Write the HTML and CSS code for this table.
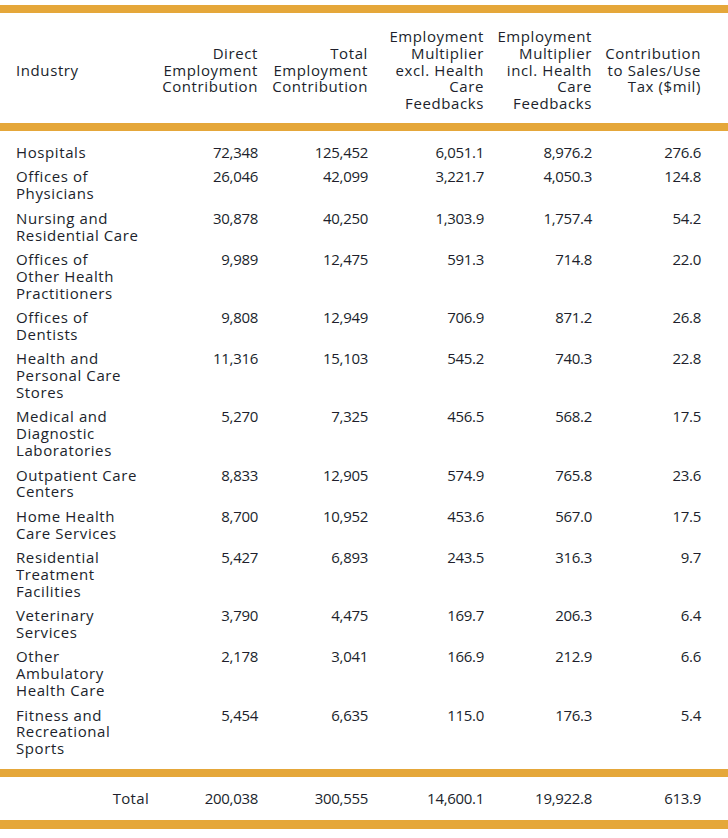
FILE: index.html
```html
<!DOCTYPE html>
<html lang="en">
<head>
<meta charset="utf-8">
<title>Health Care Employment Contribution</title>
<link rel="stylesheet" href="styles.css">
</head>
<body>
<table class="data">
  <colgroup>
    <col class="c-ind"><col class="c-dir"><col class="c-tot"><col class="c-exc"><col class="c-inc"><col class="c-tax">
  </colgroup>
  <thead>
    <tr>
      <th class="lbl">Industry</th>
      <th>Direct<br>Employment<br>Contribution</th>
      <th>Total<br>Employment<br>Contribution</th>
      <th>Employment<br>Multiplier<br>excl. Health<br>Care<br>Feedbacks</th>
      <th>Employment<br>Multiplier<br>incl. Health<br>Care<br>Feedbacks</th>
      <th>Contribution<br>to Sales/Use<br>Tax ($mil)</th>
    </tr>
  </thead>
  <tbody>
    <tr class="first"><td class="lbl">Hospitals</td><td>72,348</td><td>125,452</td><td>6,051.1</td><td>8,976.2</td><td>276.6</td></tr>
    <tr><td class="lbl">Offices of<br>Physicians</td><td>26,046</td><td>42,099</td><td>3,221.7</td><td>4,050.3</td><td>124.8</td></tr>
    <tr><td class="lbl">Nursing and<br>Residential Care</td><td>30,878</td><td>40,250</td><td>1,303.9</td><td>1,757.4</td><td>54.2</td></tr>
    <tr><td class="lbl">Offices of<br>Other Health<br>Practitioners</td><td>9,989</td><td>12,475</td><td>591.3</td><td>714.8</td><td>22.0</td></tr>
    <tr><td class="lbl">Offices of<br>Dentists</td><td>9,808</td><td>12,949</td><td>706.9</td><td>871.2</td><td>26.8</td></tr>
    <tr><td class="lbl">Health and<br>Personal Care<br>Stores</td><td>11,316</td><td>15,103</td><td>545.2</td><td>740.3</td><td>22.8</td></tr>
    <tr><td class="lbl">Medical and<br>Diagnostic<br>Laboratories</td><td>5,270</td><td>7,325</td><td>456.5</td><td>568.2</td><td>17.5</td></tr>
    <tr><td class="lbl">Outpatient Care<br>Centers</td><td>8,833</td><td>12,905</td><td>574.9</td><td>765.8</td><td>23.6</td></tr>
    <tr><td class="lbl">Home Health<br>Care Services</td><td>8,700</td><td>10,952</td><td>453.6</td><td>567.0</td><td>17.5</td></tr>
    <tr><td class="lbl">Residential<br>Treatment<br>Facilities</td><td>5,427</td><td>6,893</td><td>243.5</td><td>316.3</td><td>9.7</td></tr>
    <tr><td class="lbl">Veterinary<br>Services</td><td>3,790</td><td>4,475</td><td>169.7</td><td>206.3</td><td>6.4</td></tr>
    <tr><td class="lbl">Other<br>Ambulatory<br>Health Care</td><td>2,178</td><td>3,041</td><td>166.9</td><td>212.9</td><td>6.6</td></tr>
    <tr class="last"><td class="lbl">Fitness and<br>Recreational<br>Sports</td><td>5,454</td><td>6,635</td><td>115.0</td><td>176.3</td><td>5.4</td></tr>
  </tbody>
  <tfoot>
    <tr><td class="tot-lbl">Total</td><td>200,038</td><td>300,555</td><td>14,600.1</td><td>19,922.8</td><td>613.9</td></tr>
  </tfoot>
</table>
</body>
</html>
```

FILE: styles.css
```css
html, body {
  margin: 0;
  padding: 0;
  background: #ffffff;
}

body {
  padding-top: 5px;
  font-family: "Open Sans", "DejaVu Sans", sans-serif;
  font-size: 15px;
  line-height: 16.8px;
  color: #201f2c;
}

.data {
  width: 728px;
  border-collapse: collapse;
  table-layout: fixed;
}

.c-ind { width: 158px; }
.c-dir { width: 100px; }
.c-tot { width: 110px; }
.c-exc { width: 116px; }
.c-inc { width: 108px; }
.c-tax { width: 136px; }

.data th,
.data td {
  text-align: right;
  white-space: nowrap;
  font-weight: 400;
  padding: 4px 0 3.7px 0;
  vertical-align: top;
  letter-spacing: -0.3px;
}

.data th {
  letter-spacing: 0.6px;
}

.data th:last-child,
.data td:last-child {
  padding-right: 27px;
}

.data thead tr {
  border-top: 8px solid #e5a73a;
  border-bottom: 8px solid #e5a73a;
}

.data thead th {
  vertical-align: middle;
  padding-top: 15px;
  padding-bottom: 11px;
}

.data .lbl {
  text-align: left;
  padding-left: 16px;
  letter-spacing: 0.6px;
}

.data tbody tr.first td {
  padding-top: 13px;
}

.data tbody tr.last td {
  padding-bottom: 12.4px;
}

.data tfoot tr {
  border-top: 8px solid #e5a73a;
  border-bottom: 9px solid #e5a73a;
}

.data tfoot td {
  padding-top: 13px;
  padding-bottom: 13px;
}

.data .tot-lbl {
  text-align: right;
  padding-right: 9px;
  letter-spacing: 0.3px;
}
```
